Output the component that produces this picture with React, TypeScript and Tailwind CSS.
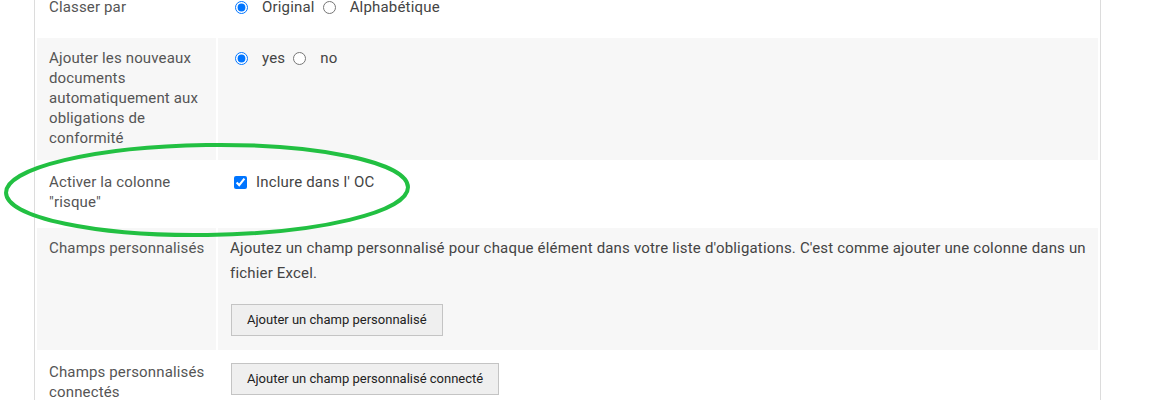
import React from 'react';

const font = { fontFamily: 'Roboto, "Liberation Sans", sans-serif' };

function Row({
  label,
  gray,
  children,
  labelClass = 'pt-[10px] pb-[13px]',
  valueClass = 'pt-[10px] pb-[13px]',
}: {
  label: React.ReactNode;
  gray?: boolean;
  children: React.ReactNode;
  labelClass?: string;
  valueClass?: string;
}) {
  const bg = gray ? 'bg-[#f7f7f7]' : 'bg-white';
  return (
    <div className="grid grid-cols-[179px_1fr] gap-x-[2px]">
      <div className={`${bg} pl-3 pr-1 text-[15px] leading-5 tracking-[0.15px] text-[#555] ${labelClass}`}>
        {label}
      </div>
      <div className={`${bg} px-3 text-[15px] leading-5 tracking-[0.18px] text-[#444] ${valueClass}`}>{children}</div>
    </div>
  );
}

function Choice({ name, options, checked }: { name: string; options: string[]; checked: string }) {
  return (
    <div className="flex items-center">
      {options.map((o) => (
        <label key={o} className="flex items-center">
          <input
            type="radio"
            name={name}
            defaultChecked={o === checked}
            className="ml-[5px] mr-[14px] h-[13px] w-[13px]"
          />
          <span className="mr-[3px]">{o}</span>
        </label>
      ))}
    </div>
  );
}

function Btn({ children }: { children: React.ReactNode }) {
  return (
    <button className="h-[32px] border border-[#c4c4c4] bg-[#efefef] px-[15px] text-[13px] tracking-normal text-[#222]">
      {children}
    </button>
  );
}

export default function App() {
  return (
    <div className="relative h-[412px] w-[1150px] overflow-hidden bg-white" style={font}>
      <div className="ml-[34px] h-full w-[1067px] border-x border-[#dcdcdc] px-[2px]">
        <div className="mt-[-12px] flex flex-col gap-y-[2px]">
          <Row label="Classer par" labelClass="pt-[9px] pb-[19px]" valueClass="pt-[9px] pb-[19px]">
            <Choice name="sort" options={['Original', 'Alphabétique']} checked="Original" />
          </Row>
          <Row
            gray
            label="Ajouter les nouveaux documents automatiquement aux obligations de conformité"
            labelClass="pt-[10px] pb-[12px] pr-3"
          >
            <Choice name="auto" options={['yes', 'no']} checked="yes" />
          </Row>
          <Row label={'Activer la colonne "risque"'} labelClass="pt-[10px] pb-[14px]">
            <label className="flex items-center">
              <input type="checkbox" defaultChecked className="ml-[4px] mr-[9px] h-[13px] w-[13px]" />
              <span>Inclure dans l' OC</span>
            </label>
          </Row>
          <Row gray label="Champs personnalisés" valueClass="pt-[8px] pb-[14px]">
            <p className="leading-[25px]">
              Ajoutez un champ personnalisé pour chaque élément dans votre liste d'obligations. C'est comme ajouter
              une colonne dans un fichier Excel.
            </p>
            <div className="mt-[18px] pl-px">
              <Btn>Ajouter un champ personnalisé</Btn>
            </div>
          </Row>
          <Row label="Champs personnalisés connectés" valueClass="pt-[11px] pb-[14px]">
            <div className="pl-px">
              <Btn>Ajouter un champ personnalisé connecté</Btn>
            </div>
          </Row>
        </div>
      </div>

      {/* green annotation */}
      <svg className="pointer-events-none absolute left-0 top-0" width="1150" height="412">
        <ellipse
          cx="207"
          cy="190"
          rx="201"
          ry="45"
          fill="none"
          stroke="#22c042"
          strokeWidth="4"
          transform="rotate(-0.8 207 190)"
        />
      </svg>
    </div>
  );
}
